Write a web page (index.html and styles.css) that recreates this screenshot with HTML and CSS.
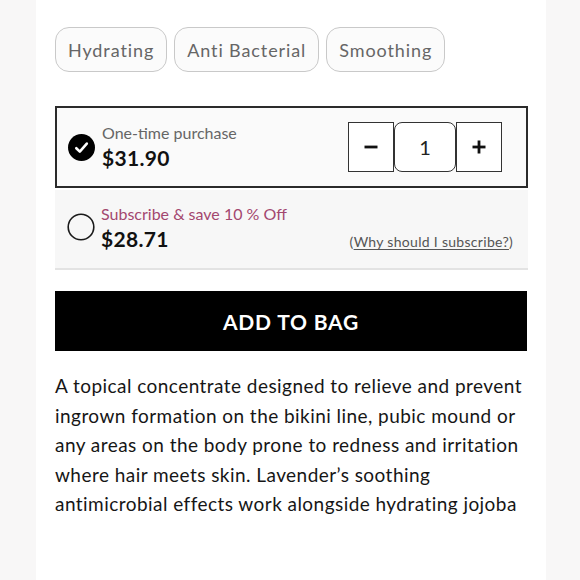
FILE: index.html
```html
<!DOCTYPE html>
<html>
<head>
<meta charset="utf-8">
<link rel="stylesheet" href="styles.css">
</head>
<body>
<div class="page">
  <div class="tags">
    <span class="tag">Hydrating</span>
    <span class="tag">Anti Bacterial</span>
    <span class="tag">Smoothing</span>
  </div>

  <div class="option option-selected">
    <svg class="check" width="27" height="27" viewBox="0 0 27 27">
      <circle cx="13.5" cy="13.5" r="13.5" fill="#000"/>
      <path d="M8.3 14.2 L11.8 17.6 L18.8 9.6" fill="none" stroke="#fff" stroke-width="2.6" stroke-linecap="round" stroke-linejoin="round"/>
    </svg>
    <div class="option-text">
      <div class="option-label">One-time purchase</div>
      <div class="option-price">$31.90</div>
    </div>
    <div class="qty">
      <div class="qty-btn">
        <svg width="16" height="16" viewBox="0 0 16 16"><line x1="1.5" y1="8" x2="14.5" y2="8" stroke="#111" stroke-width="2.8"/></svg>
      </div>
      <div class="qty-val">1</div>
      <div class="qty-btn">
        <svg width="16" height="16" viewBox="0 0 16 16"><line x1="1.5" y1="8" x2="14.5" y2="8" stroke="#111" stroke-width="2.8"/><line x1="8" y1="1.5" x2="8" y2="14.5" stroke="#111" stroke-width="2.8"/></svg>
      </div>
    </div>
  </div>

  <div class="option option-sub">
    <svg class="radio" width="28" height="28" viewBox="0 0 28 28">
      <circle cx="14" cy="14" r="12.8" fill="none" stroke="#1a1a1a" stroke-width="1.6"/>
    </svg>
    <div class="option-text">
      <div class="option-label sub-label">Subscribe &amp; save 10 % Off</div>
      <div class="option-price">$28.71</div>
    </div>
    <div class="why">(<span class="why-link">Why should I subscribe?</span>)</div>
  </div>

  <button class="add">ADD TO BAG</button>

  <p class="desc">A topical concentrate designed to relieve and prevent ingrown formation on the bikini line, pubic mound or any areas on the body prone to redness and irritation where hair meets skin. Lavender’s soothing antimicrobial effects work alongside hydrating jojoba</p>
</div>
</body>
</html>
```

FILE: styles.css
```css
* { box-sizing: border-box; }
html, body { margin: 0; padding: 0; }
body {
  background: #f8f7f7;
  font-family: "Lato", "Noto Sans", sans-serif;
  overflow: hidden;
  height: 580px;
}
.page {
  margin-left: 36px;
  width: 510px;
  height: 580px;
  background: #fff;
  padding: 27px 19px 0 19px;
  overflow: hidden;
}
.tags {
  display: flex;
  gap: 7px;
}
.tag {
  height: 45px;
  display: flex;
  align-items: center;
  padding: 0 12px;
  border: 1.5px solid #c9c9c9;
  border-radius: 14px;
  background: #fbfbfb;
  color: #666;
  font-size: 18px;
  letter-spacing: 0.9px;
}
.option {
  display: flex;
  align-items: center;
  width: 473px;
}
.option-selected {
  margin-top: 34px;
  height: 82px;
  border: 2px solid #2b2b2b;
  background: #fafafa;
  padding: 0 24px 0 11px;
}
.check { flex: none; margin-right: 7px; margin-top: 1px; }
.option-text { flex: 1; display: flex; flex-direction: column; }
.option-label {
  font-size: 16px;
  color: #666;
  line-height: 20px;
}
.option-price {
  font-size: 21px;
  font-weight: 700;
  color: #111;
  line-height: 26px;
  margin-top: 2px;
  letter-spacing: 0.3px;
}
.qty { display: flex; height: 50px; }
.qty-btn {
  width: 46px;
  height: 50px;
  border: 1.5px solid #333;
  background: #fff;
  display: flex;
  align-items: center;
  justify-content: center;
}
.qty-val {
  width: 62px;
  height: 50px;
  border: 1.5px solid #333;
  border-radius: 8px;
  background: #fff;
  display: flex;
  align-items: center;
  justify-content: center;
  font-size: 20px;
  color: #222;
}
.option-sub {
  margin-top: 2px;
  height: 80px;
  background: #f7f7f7;
  border-bottom: 2px solid #e3e3e3;
  padding: 0 15px 0 12px;
  align-items: flex-start;
  padding-top: 14px;
}
.radio { flex: none; margin-right: 6px; margin-top: 9px; }
.sub-label { color: #a3476f; }
.why {
  align-self: flex-end;
  margin-bottom: 18px;
  font-size: 14px;
  color: #555;
  letter-spacing: 0.3px;
}
.why-link { text-decoration: underline; text-underline-offset: 2px; }
.add {
  display: block;
  margin-top: 21px;
  width: 472px;
  height: 60px;
  border: none;
  background: #000;
  color: #fff;
  font-family: "Lato", "Noto Sans", sans-serif;
  font-size: 21px;
  font-weight: 700;
  letter-spacing: 0.8px;
  padding: 0;
}
.desc {
  margin: 20px 0 0 0;
  font-size: 19px;
  line-height: 29.6px;
  letter-spacing: 0.45px;
  color: #161616;
  width: 472px;
}
```
